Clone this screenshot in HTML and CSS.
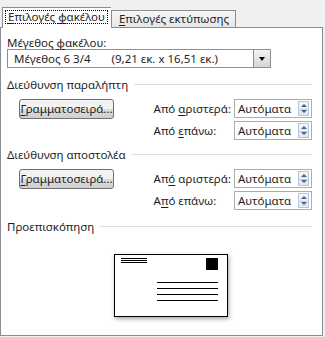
FILE: index.html
```html
<!DOCTYPE html>
<html lang="el">
<head>
  <meta charset="UTF-8">
  <title>Επιλογές φακέλου</title>
  <link rel="stylesheet" href="styles.css">
</head>
<body>

  <div class="tabs">
    <div class="tab active"><span class="focus"><u>Ε</u>πιλογές <u>φ</u>ακέλου</span></div>
    <div class="tab"><span><u>Ε</u>πιλογές εκτύπωσης</span></div>
  </div>

  <div class="panel">
    <div class="label">Μέγεθος <u>φ</u>ακέλου:</div>
    <div class="select">
      <span class="size-name">Μέγεθος 6 3/4</span>
      <span class="size-dim">(9,21 εκ. x 16,51 εκ.)</span>
      <span class="select-btn"></span>
    </div>

    <div class="group-title"><span>Διεύθυνση παραλήπτη</span></div>
    <div class="address">
      <button class="font-btn"><u>Γ</u>ραμματοσειρά...</button>
      <div class="fields">
        <span>Από <u>α</u>ριστερά:</span>
        <div class="spin"><span>Αυτόματα</span><span class="spin-btn"></span></div>
        <span>Από <u>ε</u>πάνω:</span>
        <div class="spin"><span>Αυτόματα</span><span class="spin-btn"></span></div>
      </div>
    </div>

    <div class="group-title"><span>Διεύθυνση αποστολέα</span></div>
    <div class="address">
      <button class="font-btn"><u>Γ</u>ραμματοσειρά...</button>
      <div class="fields">
        <span>Απ<u>ό</u> αριστερά:</span>
        <div class="spin"><span>Αυτόματα</span><span class="spin-btn"></span></div>
        <span>Α<u>π</u>ό επάνω:</span>
        <div class="spin"><span>Αυτόματα</span><span class="spin-btn"></span></div>
      </div>
    </div>

    <div class="group-title preview-title"><span>Προεπισκόπηση</span></div>
    <div class="preview">
      <svg class="envelope" width="114" height="63" viewBox="0 0 114 63">
        <rect x="0.5" y="0.5" width="113" height="62" fill="#fff" stroke="#000"/>
        <g stroke="#000" stroke-width="1">
          <line x1="7" y1="4.5" x2="33" y2="4.5"/>
          <line x1="7" y1="6.5" x2="33" y2="6.5"/>
          <line x1="7" y1="8.5" x2="33" y2="8.5"/>
          <line x1="43" y1="28.5" x2="104" y2="28.5"/>
          <line x1="43" y1="34.5" x2="104" y2="34.5"/>
          <line x1="43" y1="40.5" x2="104" y2="40.5"/>
          <line x1="43" y1="46.5" x2="104" y2="46.5"/>
        </g>
        <rect x="92" y="4" width="12" height="12" fill="#000"/>
      </svg>
    </div>
  </div>

</body>
</html>
```

FILE: styles.css
```css
body {
  margin: 0;
  padding: 7px 2px 1px 0;
  background: #f0f0f0;
  font-family: "Noto Sans", "Open Sans", sans-serif;
  font-size: 11.5px;
  color: #1e1e1e;
}

u {
  text-decoration-thickness: 1px;
  text-underline-offset: 2px;
}

.tabs {
  display: flex;
  align-items: flex-end;
  padding-left: 2px;
  position: relative;
  z-index: 1;
  margin-bottom: -1px;
}

.tab {
  border: 1px solid #898c95;
  border-bottom: none;
  background: linear-gradient(#f6f6f6, #e6e6e6);
  padding: 0 6px 0 7px;
  height: 16px;
  line-height: 16px;
  margin-bottom: 1px;
}

.tab.active {
  background: #fff;
  height: 20px;
  line-height: 18px;
  padding: 0 3px 0 2px;
  margin-bottom: 0;
  border-right: none;
}

.focus {
  display: inline-block;
  border: 1px dotted #000;
  padding: 0 2px;
  line-height: 12px;
  margin-top: 2px;
}

.panel {
  background: #fff;
  border: 1px solid #898c95;
  height: 307px;
  padding: 0 10px 0 6px;
}

.label {
  margin-top: 8px;
  line-height: 13px;
}

.select {
  display: flex;
  align-items: center;
  height: 17px;
  border: 1px solid #8e8f8f;
  width: 256px;
  padding-left: 6px;
}

.size-dim {
  margin-left: 21px;
}

.select-btn {
  margin-left: auto;
  width: 17px;
  height: 17px;
  box-sizing: border-box;
  border-left: 1px solid #8e8f8f;
  background: linear-gradient(#f2f2f2, #d6d6d6);
  position: relative;
}

.select-btn::after {
  content: "";
  position: absolute;
  left: 5px;
  top: 7px;
  border-left: 3px solid transparent;
  border-right: 3px solid transparent;
  border-top: 4px solid #000;
}

.group-title {
  display: flex;
  align-items: center;
  gap: 6px;
  margin-top: 8px;
  line-height: 17px;
}

.group-title::after {
  content: "";
  flex: 1;
  border-top: 1px solid #d5dfe5;
}

.address {
  display: flex;
  align-items: flex-start;
  margin-top: 6px;
}

.address + .group-title {
  margin-top: 6px;
}

.font-btn {
  font: inherit;
  color: inherit;
  margin-left: 12px;
  width: 95px;
  height: 20px;
  padding: 0;
  border: 1px solid #707070;
  border-radius: 3px;
  background: linear-gradient(#f2f2f2 50%, #dddddd 50%, #cfcfcf);
  line-height: 16px;
}

.fields {
  margin-left: auto;
  display: grid;
  grid-template-columns: auto 78px;
  column-gap: 3px;
  row-gap: 3px;
  align-items: center;
}

.spin {
  display: flex;
  align-items: center;
  height: 17px;
  border: 1px solid #abadb3;
  padding-left: 3px;
}

.spin-btn {
  margin-left: auto;
  width: 11px;
  height: 15px;
  margin-right: 2px;
  background:
    linear-gradient(#c7d6ea, #c7d6ea) center 7px / 100% 1px no-repeat,
    linear-gradient(#f4f7fb, #dde6f2);
  border: 1px solid #b9c7da;
  box-sizing: border-box;
  position: relative;
}

.spin-btn::before,
.spin-btn::after {
  content: "";
  position: absolute;
  left: 2px;
  border-left: 3px solid transparent;
  border-right: 3px solid transparent;
}

.spin-btn::before {
  top: 2px;
  border-bottom: 3px solid #4d6185;
}

.spin-btn::after {
  bottom: 2px;
  border-top: 3px solid #4d6185;
}

.address + .preview-title {
  margin-top: 8px;
}

.preview {
  display: flex;
  justify-content: center;
  margin-top: 19px;
  padding-left: 22px;
}

.envelope {
  display: block;
  filter: drop-shadow(1px 2px 2px rgba(0, 0, 0, 0.35));
}
```
